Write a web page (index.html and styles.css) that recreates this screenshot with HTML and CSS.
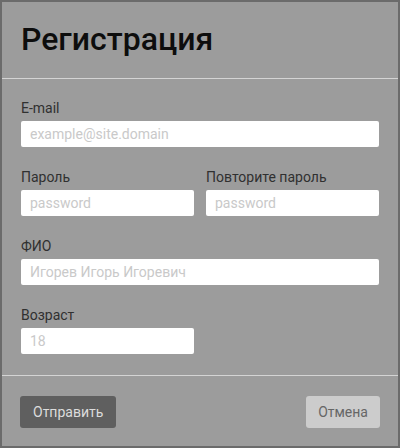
FILE: index.html
```html
<!DOCTYPE html>
<html lang="ru">
<head>
<meta charset="utf-8">
<title>Регистрация</title>
<link rel="stylesheet" href="styles.css">
</head>
<body>
<div class="modal">
  <div class="modal-header">
    <h1 class="modal-title">Регистрация</h1>
  </div>
  <form class="modal-body">
    <div class="group">
      <label class="label" for="email">E-mail</label>
      <input class="input" id="email" type="text" placeholder="example@site.domain">
    </div>
    <div class="row">
      <div class="group">
        <label class="label" for="pass">Пароль</label>
        <input class="input" id="pass" type="text" placeholder="password">
      </div>
      <div class="group">
        <label class="label" for="pass2">Повторите пароль</label>
        <input class="input" id="pass2" type="text" placeholder="password">
      </div>
    </div>
    <div class="group">
      <label class="label" for="fio">ФИО</label>
      <input class="input" id="fio" type="text" placeholder="Игорев Игорь Игоревич">
    </div>
    <div class="row">
      <div class="group">
        <label class="label" for="age">Возраст</label>
        <input class="input" id="age" type="text" placeholder="18">
      </div>
      <div></div>
    </div>
  </form>
  <div class="modal-footer">
    <button class="btn btn-primary" type="button">Отправить</button>
    <button class="btn btn-secondary" type="button">Отмена</button>
  </div>
</div>
</body>
</html>
```
FILE: styles.css
```css
* { box-sizing: border-box; }
html, body { margin: 0; padding: 0; }
body {
  width: 400px;
  height: 448px;
  font-family: Roboto, "Noto Sans", sans-serif;
  background: #9c9c9c;
}
.modal {
  width: 400px;
  height: 448px;
  border: 2px solid #6b6b6b;
  background: #9c9c9c;
  display: flex;
  flex-direction: column;
}
.modal-header {
  height: 77px;
  border-bottom: 1px solid #d4d4d4;
  padding: 0 19px;
  display: flex;
  align-items: center;
}
.modal-title {
  margin: 0;
  font-size: 32px;
  font-weight: 500;
  line-height: 38px;
  color: #0d0d0d;
  padding-bottom: 2px;
}
.modal-body {
  margin: 0;
  padding: 19px 19px 21px;
  border-bottom: 1px solid #d4d4d4;
  display: flex;
  flex-direction: column;
  gap: 20px;
}
.row {
  display: grid;
  grid-template-columns: minmax(0, 1fr) minmax(0, 1fr);
  gap: 12px;
}
.group {
  display: flex;
  flex-direction: column;
  min-width: 0;
}
.label {
  font-size: 14px;
  line-height: 20px;
  color: #303030;
  margin-bottom: 3px;
}
.input {
  width: 100%;
  min-width: 0;
  height: 26px;
  border: none;
  border-radius: 2px;
  background: #fff;
  padding: 0 9px;
  font-family: Roboto, "Noto Sans", sans-serif;
  font-size: 14px;
  color: #333;
  outline: none;
}
.input::placeholder { color: #c9c9c9; }
.modal-footer {
  flex: 1;
  padding: 20px 18px 0 18px;
  display: flex;
  justify-content: space-between;
  align-items: flex-start;
}
.btn {
  height: 32px;
  border: none;
  border-radius: 3px;
  font-family: Roboto, "Noto Sans", sans-serif;
  font-size: 14px;
  padding: 0 13px;
}
.btn-primary {
  background: #5f5f5f;
  color: #dcdcdc;
}
.btn-secondary {
  background: #cccccc;
  color: #666;
  padding: 0 12px;
}
```
